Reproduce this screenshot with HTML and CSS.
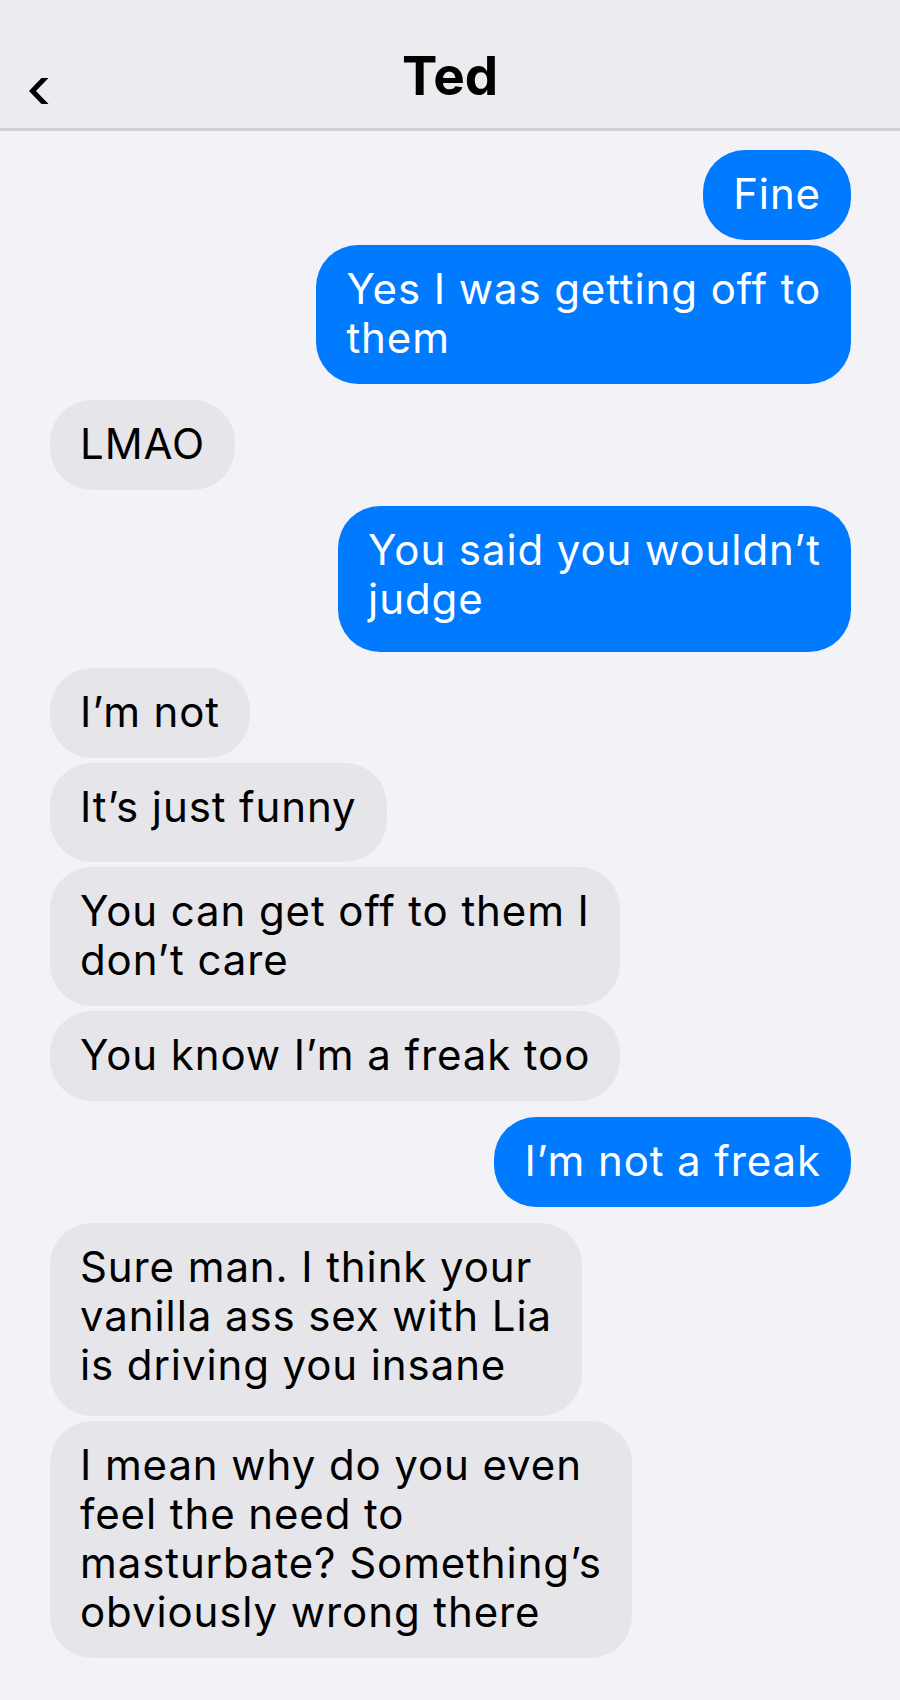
FILE: index.html
```html
<!DOCTYPE html>
<html lang="en">
<head>
<meta charset="utf-8">
<title>Ted</title>
<link rel="stylesheet" href="styles.css">
</head>
<body>
<div class="screen">
  <header class="nav">
    <div class="nav-back">
      <svg class="chevron" viewBox="0 0 24 32" width="24" height="32" aria-hidden="true">
        <polygon points="14.5,2 21.5,2 9,15 21.5,28 14.5,28 2,15" fill="#000"/>
      </svg>
    </div>
    <h1 class="nav-title">Ted</h1>
    <div class="nav-spacer"></div>
  </header>
  <main class="thread">
    <div class="group group--out">
      <div class="bubble bubble--out">Fine</div>
      <div class="bubble bubble--out">Yes I was getting off to<br>them</div>
    </div>
    <div class="group group--in">
      <div class="bubble bubble--in">LMAO</div>
    </div>
    <div class="group group--out">
      <div class="bubble bubble--out bubble--tail-md">You said you wouldn’t<br>judge</div>
    </div>
    <div class="group group--in">
      <div class="bubble bubble--in">I’m not</div>
      <div class="bubble bubble--in bubble--tail-lg">It’s just funny</div>
      <div class="bubble bubble--in">You can get off to them I<br>don’t care</div>
      <div class="bubble bubble--in">You know I’m a freak too</div>
    </div>
    <div class="group group--out">
      <div class="bubble bubble--out">I’m not a freak</div>
    </div>
    <div class="group group--in">
      <div class="bubble bubble--in bubble--tail-sm">Sure man. I think your<br>vanilla ass sex with Lia<br>is driving you insane</div>
      <div class="bubble bubble--in">I mean why do you even<br>feel the need to<br>masturbate? Something’s<br>obviously wrong there</div>
    </div>
  </main>
</div>
</body>
</html>
```

FILE: styles.css
```css
html, body {
  margin: 0;
  padding: 0;
}

body {
  background: #f2f2f7;
  font-family: Inter, Roboto, "Noto Sans", "Liberation Sans", sans-serif;
  color: #000;
}

.screen {
  width: 900px;
  min-height: 1700px;
  background: #f2f2f7;
}

.nav {
  display: grid;
  grid-template-columns: 1fr auto 1fr;
  align-items: start;
  height: 131px;
  box-sizing: border-box;
  padding: 46px 0 0 0;
  background: #ebebf0;
  border-bottom: 3px solid #d1d1d6;
}

.nav-back {
  padding-left: 27px;
  padding-top: 30px;
  display: flex;
}

.chevron {
  display: block;
}

.nav-title {
  margin: 0;
  font-size: 53px;
  line-height: 60px;
  font-weight: 700;
  text-align: center;
}

.thread {
  display: flex;
  flex-direction: column;
  gap: 16px;
  padding: 19px 49px 40px 50px;
}

.group {
  display: flex;
  flex-direction: column;
  gap: 5px;
}

.group--out {
  align-items: flex-end;
}

.group--in {
  align-items: flex-start;
}

.bubble {
  font-size: 42px;
  line-height: 49px;
  letter-spacing: 0.9px;
  padding: 18.5px 30px 22.5px 30px;
  border-radius: 42px;
  white-space: nowrap;
}

.bubble--out {
  background: #007aff;
  color: #fff;
}

.bubble--in {
  background: #e5e5ea;
  color: #000;
}

.bubble--tail-sm {
  padding-bottom: 27.5px;
}

.bubble--tail-md {
  padding-bottom: 29.5px;
}

.bubble--tail-lg {
  padding-bottom: 31.5px;
}
```
